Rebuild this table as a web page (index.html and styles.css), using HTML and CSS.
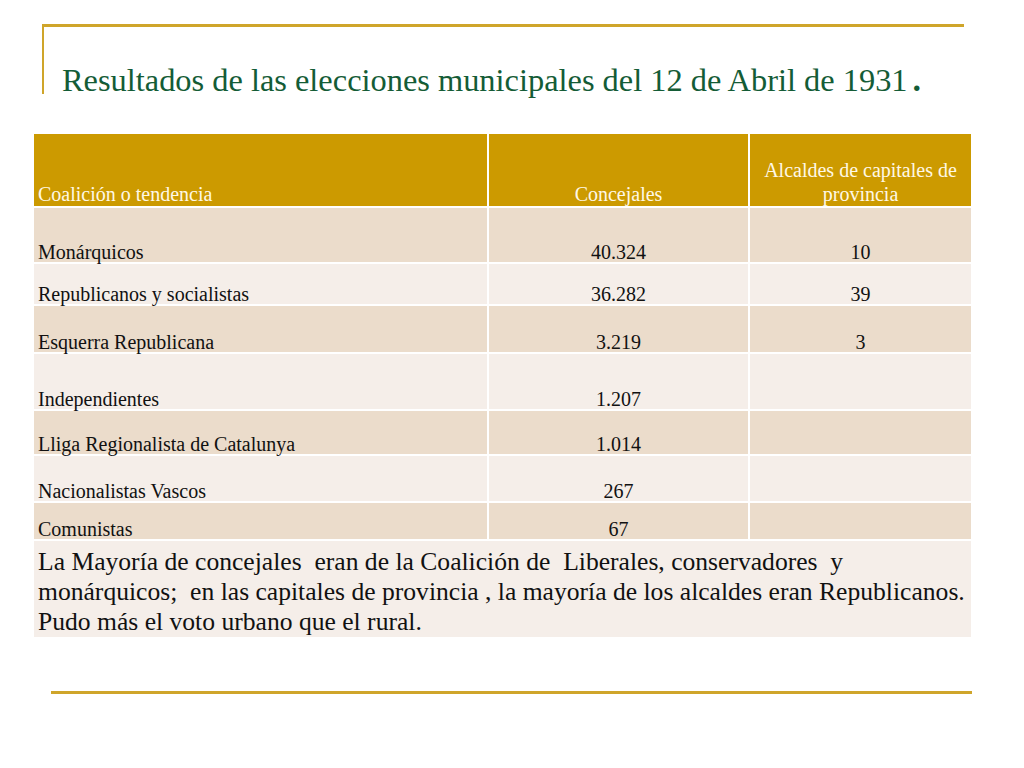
FILE: index.html
```html
<!DOCTYPE html>
<html lang="es">
<head>
<meta charset="utf-8">
<title>Resultados de las elecciones municipales del 12 de Abril de 1931</title>
<link rel="stylesheet" href="styles.css">
</head>
<body>
<div class="slide">
  <header class="title-frame">
    <h1 class="title">Resultados de las elecciones municipales del 12 de Abril de 1931<span class="dot">.</span></h1>
  </header>
  <table class="results">
    <colgroup>
      <col class="c1"><col class="c2"><col class="c3">
    </colgroup>
    <tr class="head">
      <th class="left">Coalición o tendencia</th>
      <th>Concejales</th>
      <th>Alcaldes de capitales de provincia</th>
    </tr>
    <tr class="dark h54"><td class="left">Monárquicos</td><td>40.324</td><td>10</td></tr>
    <tr class="light h40"><td class="left">Republicanos y socialistas</td><td>36.282</td><td>39</td></tr>
    <tr class="dark h46"><td class="left">Esquerra Republicana</td><td>3.219</td><td>3</td></tr>
    <tr class="light h55"><td class="left">Independientes</td><td>1.207</td><td></td></tr>
    <tr class="dark h43"><td class="left">Lliga Regionalista de Catalunya</td><td>1.014</td><td></td></tr>
    <tr class="light h45"><td class="left">Nacionalistas Vascos</td><td>267</td><td></td></tr>
    <tr class="dark h36"><td class="left">Comunistas</td><td>67</td><td></td></tr>
    <tr class="light note"><td colspan="3">La Mayoría de concejales&nbsp; eran de la Coalición de&nbsp; Liberales, conservadores&nbsp; y<br>monárquicos;&nbsp; en las capitales de provincia , la mayoría de los alcaldes eran Republicanos.<br>Pudo más el voto urbano que el rural.</td></tr>
  </table>
  <div class="bottom-rule"></div>
</div>
</body>
</html>
```
FILE: styles.css
```css
html, body {
  margin: 0;
  padding: 0;
  background: #ffffff;
}
.slide {
  width: 1024px;
  height: 768px;
  position: relative;
  font-family: "Liberation Serif", "Times New Roman", serif;
  overflow: hidden;
}
.title-frame {
  margin: 24px 0 0 42px;
  width: 922px;
  height: 70px;
  border-top: 3px solid #cfa52a;
  border-left: 2px solid #cfa52a;
  box-sizing: border-box;
}
.title {
  margin: 0;
  padding: 35px 0 0 18px;
  font-weight: normal;
  font-size: 32.4px;
  line-height: 36px;
  color: #145c36;
  white-space: nowrap;
}
.dot {
  font-weight: bold;
  font-size: 34px;
  margin-left: 5px;
}
.results {
  margin: 38px 0 0 32px;
  border-collapse: separate;
  border-spacing: 2px;
  table-layout: fixed;
  width: 941px;
  font-size: 20px;
  color: #111;
}
.c1 { width: 453px; }
.c2 { width: 259px; }
.c3 { width: 221px; }
.results th,
.results td {
  padding: 0 4px;
  vertical-align: bottom;
  text-align: center;
  line-height: 20px;
}
.results .left { text-align: left; }
.head th {
  background: #cc9a00;
  color: #fff8e6;
  font-weight: normal;
  height: 72px;
  line-height: 24px;
}
.dark td { background: #ebdccb; }
.light td { background: #f5eee9; }
.h54 td { height: 54px; }
.h40 td { height: 40px; }
.h46 td { height: 46px; }
.h55 td { height: 55px; }
.h43 td { height: 43px; }
.h45 td { height: 45px; }
.h36 td { height: 36px; }
.note td {
  height: 95px;
  text-align: left;
  vertical-align: top;
  font-size: 25.6px;
  line-height: 30px;
  padding-top: 6px;
  white-space: nowrap;
  box-sizing: border-box;
}
.bottom-rule {
  margin: 52px 0 0 51px;
  width: 921px;
  height: 3px;
  background: #cfa52a;
}
```
